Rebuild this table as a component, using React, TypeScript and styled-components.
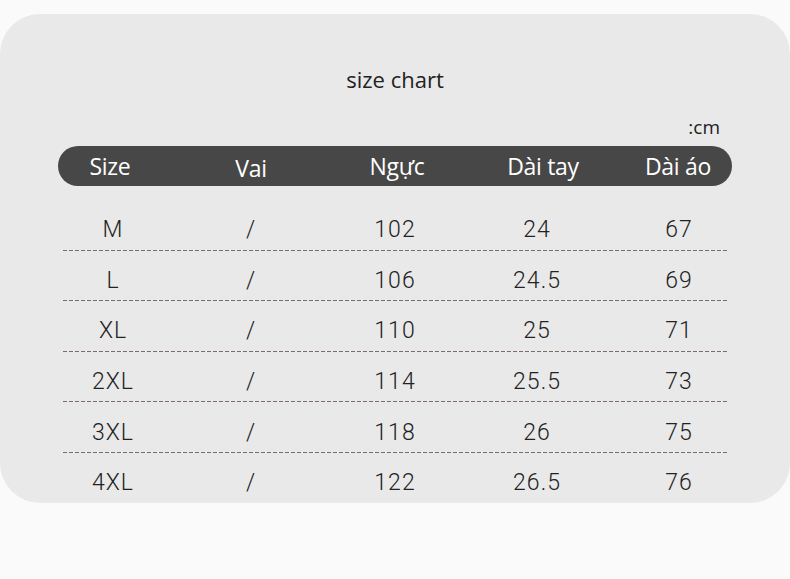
import React from "react";
import styled, { createGlobalStyle } from "styled-components";

const Global = createGlobalStyle`
  html, body { margin: 0; padding: 0; background: #fafafa; }
  body { width: 790px; height: 579px; overflow: hidden; }
`;

const Page = styled.div`
  width: 790px;
  height: 579px;
  padding-top: 14px;
  box-sizing: border-box;
`;

const Card = styled.section`
  width: 790px;
  height: 489px;
  background: #e9e9e9;
  border-radius: 40px;
  box-sizing: border-box;
  padding: 50px 0 0 58px;
  display: flex;
  flex-direction: column;
`;

const Title = styled.h1`
  margin: 0 0 0 -58px;
  font-family: "Open Sans", "Noto Sans", sans-serif;
  font-weight: 400;
  font-size: 22px;
  line-height: 30px;
  color: #222;
  text-align: center;
`;

const Unit = styled.div`
  width: 662px;
  margin-top: 20px;
  text-align: right;
  font-family: "Open Sans", "Noto Sans", sans-serif;
  font-size: 19px;
  line-height: 26px;
  color: #222;
`;

const HeaderBar = styled.div`
  width: 674px;
  height: 40px;
  margin-top: 6px;
  flex-shrink: 0;
  background: #474747;
  border-radius: 20px;
  display: grid;
  grid-template-columns: 104px 178px 114px 178px 92px;
  align-items: center;
`;

const HeadCell = styled.div<{ $dy?: number }>`
  text-align: center;
  font-family: "Open Sans", "Noto Sans", sans-serif;
  font-weight: 500;
  font-size: 23px;
  line-height: 30px;
  letter-spacing: -0.3px;
  color: #fff;
  white-space: nowrap;
  transform: translateY(${(p) => p.$dy ?? 0}px);
`;

const Rows = styled.div`
  margin-top: 14px;
  margin-left: 5px;
  width: 666px;
  display: flex;
  flex-direction: column;
  flex-shrink: 0;
`;

const Row = styled.div<{ $last?: boolean }>`
  height: 50.6px;
  flex-shrink: 0;
  box-sizing: border-box;
  display: grid;
  grid-template-columns: 100px 176px 112px 172px 112px;
  align-items: center;
  padding-top: 10px;
  background-image: ${(p) =>
    p.$last
      ? "none"
      : "linear-gradient(to right, #7d6a6b 0 4px, transparent 4px 6px)"};
  background-size: 6px 1px;
  background-repeat: repeat-x;
  background-position: 0 100%;
`;

const Cell = styled.div`
  text-align: center;
  font-family: Roboto, "Liberation Sans", sans-serif;
  font-weight: 300;
  font-size: 23px;
  line-height: 30px;
  letter-spacing: 1px;
  color: #222;
  white-space: nowrap;
`;

const headers = ["Size", "Vai", "Ngực", "Dài tay", "Dài áo"];
const data = [
  ["M", "/", "102", "24", "67"],
  ["L", "/", "106", "24.5", "69"],
  ["XL", "/", "110", "25", "71"],
  ["2XL", "/", "114", "25.5", "73"],
  ["3XL", "/", "118", "26", "75"],
  ["4XL", "/", "122", "26.5", "76"],
];

export default function App() {
  return (
    <Page>
      <Global />
      <Card>
        <Title>size chart</Title>
        <Unit>:cm</Unit>
        <HeaderBar>
          {headers.map((h, i) => (
            <HeadCell key={h} $dy={i === 1 ? 2 : 0}>
              {h}
            </HeadCell>
          ))}
        </HeaderBar>
        <Rows>
          {data.map((r, i) => (
            <Row key={r[0]} $last={i === data.length - 1}>
              {r.map((c, j) => (
                <Cell key={j}>{c}</Cell>
              ))}
            </Row>
          ))}
        </Rows>
      </Card>
    </Page>
  );
}
